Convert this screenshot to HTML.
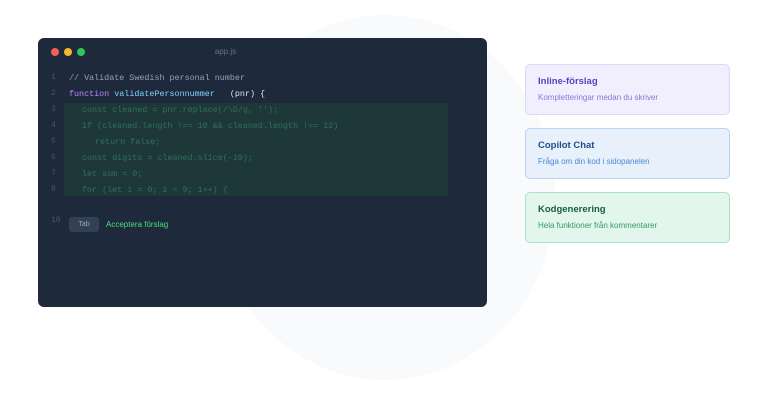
<!DOCTYPE html>
<html><head><style>
body{margin:0;width:768px;height:403px;background:#fff;position:relative;overflow:hidden;font-family:"Liberation Sans",sans-serif}
.bg{position:absolute;left:215px;top:15px;width:340px;height:365px;border-radius:50%;background:#f8fafc}
.ed{position:absolute;left:38px;top:38px;width:449px;height:269px;background:#1e293b;border-radius:6px}
.dot{position:absolute;top:10px;width:8px;height:8px;border-radius:50%}
.title{position:absolute;top:9px;left:0;width:375px;text-align:center;font-size:8px;color:#64748b}
.n{position:absolute;left:13px;color:#475569;font-family:"Liberation Mono",monospace;font-size:8px}
.c{position:absolute;left:31px;font-family:"Liberation Mono",monospace;font-size:8.4px;white-space:pre}
.i1{left:44px}.i2{left:57px}
.hl{position:absolute;left:26px;top:65px;width:384px;height:93px;background:#1f3a3a;opacity:.85}
.g{color:#2d7358}
.card{position:absolute;left:525px;width:203px;height:49px;border-radius:5px;border:1px solid}
.card b{position:absolute;left:12px;top:11px;font-size:9.5px}
.card span{position:absolute;left:12px;top:28px;font-size:8px}
</style></head><body>
<div class="bg"></div>
<div class="ed">
<div class="dot" style="left:13px;background:#f0605a"></div>
<div class="dot" style="left:26px;background:#f5b92d"></div>
<div class="dot" style="left:39px;background:#2ec75a"></div>
<div class="title">app.js</div>
<div class="hl"></div>
<div class="n" style="top:35px">1</div><div class="c" style="top:35px;color:#94a3b8">// Validate Swedish personal number</div>
<div class="n" style="top:51px">2</div><div class="c" style="top:51px"><span style="color:#c084fc">function</span> <span style="color:#7dd3fc">validatePersonnummer</span>   <span style="color:#e2e8f0">(pnr) {</span></div>
<div class="n" style="top:67px">3</div><div class="c g i1" style="top:67px">const cleaned = pnr.replace(/\D/g, '');</div>
<div class="n" style="top:83px">4</div><div class="c g i1" style="top:83px">if (cleaned.length !== 10 &amp;&amp; cleaned.length !== 12)</div>
<div class="n" style="top:99px">5</div><div class="c g i2" style="top:99px">return false;</div>
<div class="n" style="top:115px">6</div><div class="c g i1" style="top:115px">const digits = cleaned.slice(-10);</div>
<div class="n" style="top:131px">7</div><div class="c g i1" style="top:131px">let sum = 0;</div>
<div class="n" style="top:147px">8</div><div class="c g i1" style="top:147px">for (let i = 0; i &lt; 9; i++) {</div>
<div class="n" style="top:178px;left:13px">10</div>
<div style="position:absolute;left:31px;top:179px;width:30px;height:15px;background:#334155;border-radius:3px;color:#94a3b8;font-size:7px;text-align:center;line-height:15px">Tab</div>
<div style="position:absolute;left:68px;top:182px;color:#4ade80;font-size:8px">Acceptera förslag</div>
</div>
<div class="card" style="top:64px;background:#f1effd;border-color:#ddd8f7"><b style="color:#5b3fc4">Inline-förslag</b><span style="color:#8b74db">Kompletteringar medan du skriver</span></div>
<div class="card" style="top:128px;background:#e7f0fb;border-color:#b8d4ee"><b style="color:#1e4e8c">Copilot Chat</b><span style="color:#4a8ad0">Fråga om din kod i sidopanelen</span></div>
<div class="card" style="top:192px;background:#e3f6ee;border-color:#a9e2c6"><b style="color:#17603d">Kodgenerering</b><span style="color:#2f9a63">Hela funktioner från kommentarer</span></div>
</body></html>
